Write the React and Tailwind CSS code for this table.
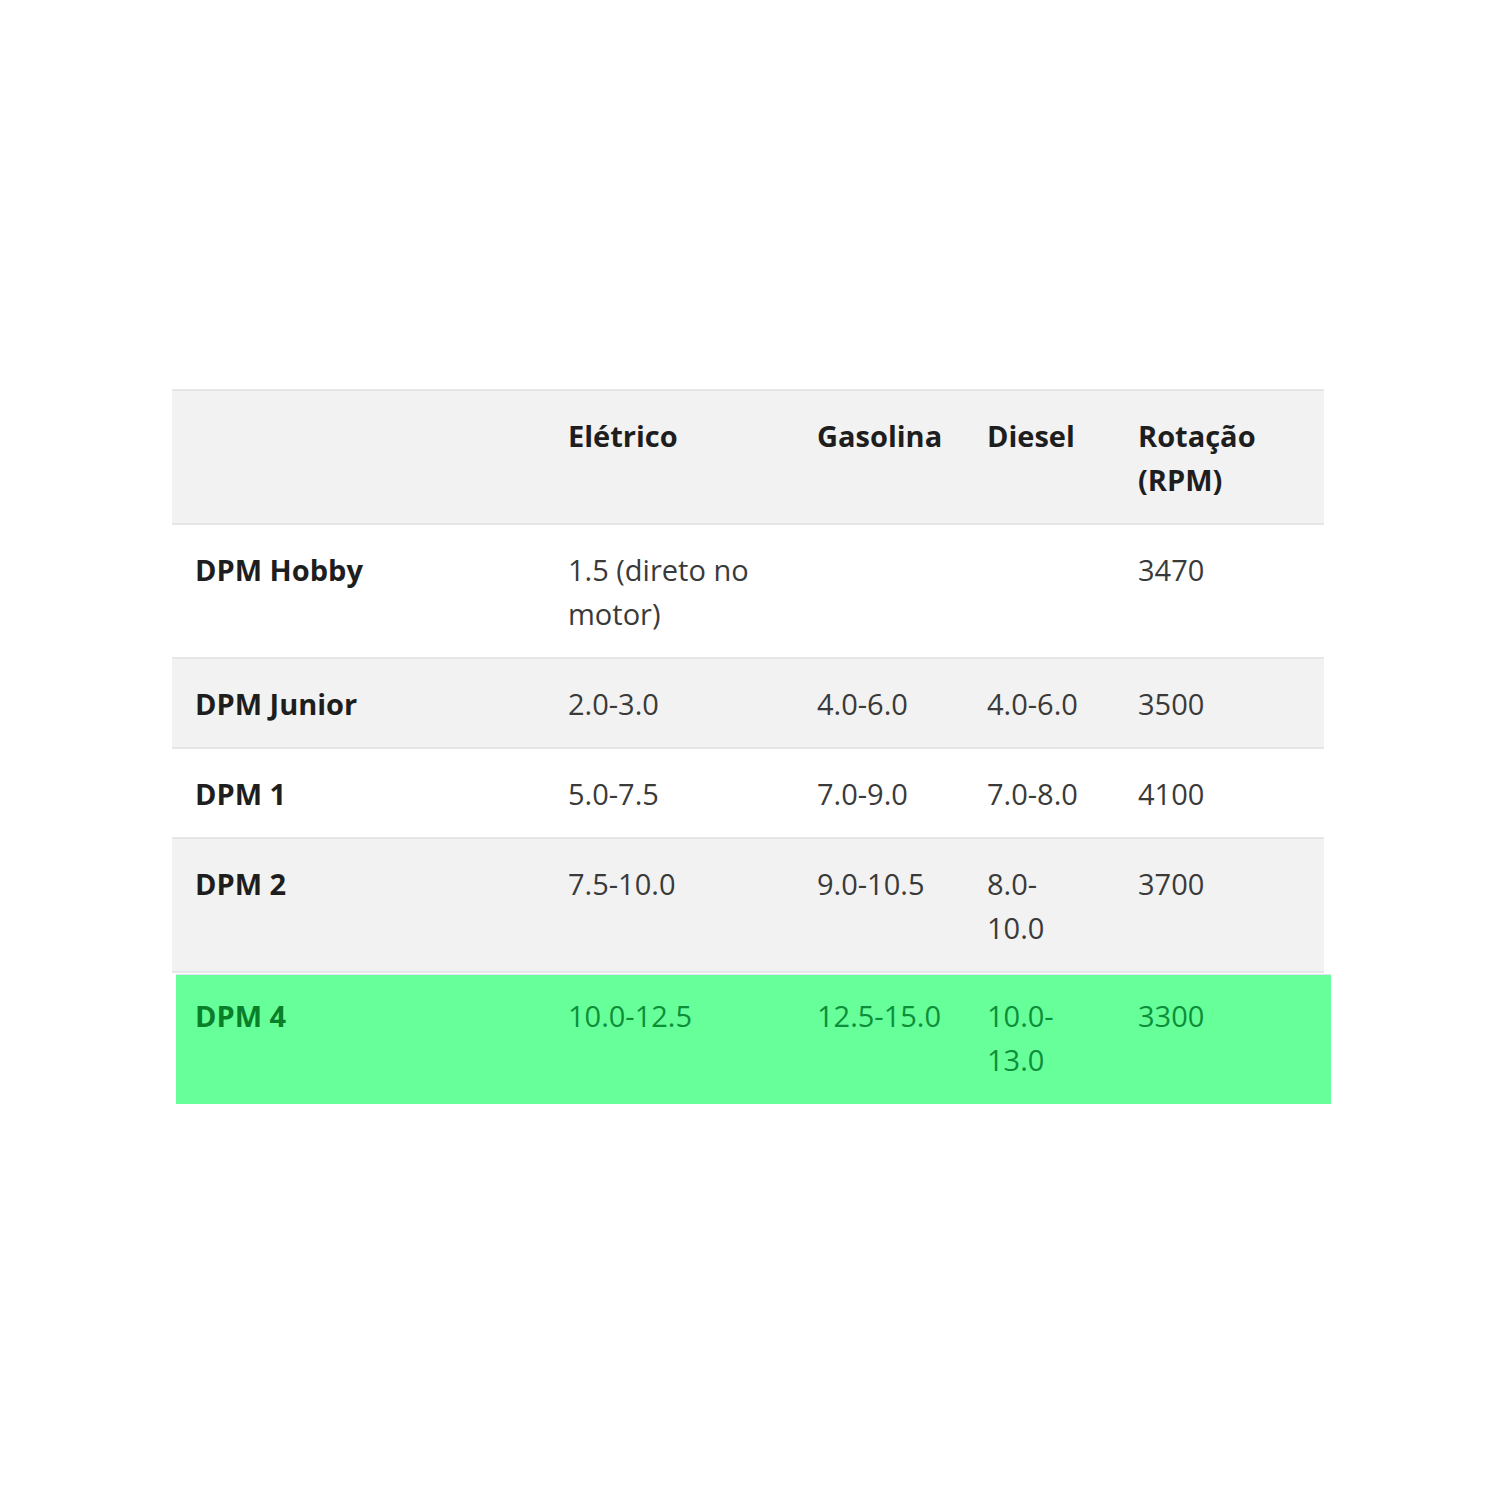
const COLS = "grid grid-cols-[373px_249px_170px_151px_209px]";
const PAD = ["pl-[23px] pr-[16px]", "pl-[23px] pr-[16px]", "pl-[23px] pr-[14px]", "pl-[23px] pr-[24px]", "pl-[23px] pr-[16px]"];

const HEAD = ["", "Elétrico", "Gasolina", "Diesel", "Rotação (RPM)"];

const ROWS = [
  { name: "DPM Hobby", cells: ["1.5 (direto no motor)", "", "", "3470"], bg: "bg-white" },
  { name: "DPM Junior", cells: ["2.0-3.0", "4.0-6.0", "4.0-6.0", "3500"], bg: "bg-[#f2f2f2]" },
  { name: "DPM 1", cells: ["5.0-7.5", "7.0-9.0", "7.0-8.0", "4100"], bg: "bg-white" },
  { name: "DPM 2", cells: ["7.5-10.0", "9.0-10.5", "8.0-10.0", "3700"], bg: "bg-[#f2f2f2]" },
];

export default function App() {
  return (
    <div className="min-h-[1500px] w-[1500px] bg-white pt-[389px] font-['Open_Sans',sans-serif] text-[29px] leading-[44px]">
      <div className="ml-[172px] w-[1152px]">
        {/* header */}
        <div className={`${COLS} border-y-2 border-[#e6e6e6] bg-[#f2f2f2] font-bold text-[#1e1e1e]`}>
          {HEAD.map((h, i) => (
            <div key={i} className={`${PAD[i]} pt-[23px] pb-[21px]`}>
              {h}
            </div>
          ))}
        </div>

        {ROWS.map((r) => (
          <div key={r.name} className={`${COLS} border-b-2 border-[#e6e6e6] ${r.bg} text-[#3a3a3a]`}>
            <div className={`${PAD[0]} pt-[23px] pb-[21px] font-bold text-[#1e1e1e]`}>{r.name}</div>
            {r.cells.map((c, i) => (
              <div key={i} className={`${PAD[i + 1]} pt-[23px] pb-[21px]`}>
                {c}
              </div>
            ))}
          </div>
        ))}
      </div>

      {/* highlighted row */}
      <div className="ml-[176px] mt-[1px] grid w-[1155px] grid-cols-[369px_249px_170px_151px_216px] border-t border-[#dfe4f5] bg-[#66ff99] text-[#0d8f3a]">
        <div className="pl-[19px] pr-[16px] pt-[19px] pb-[22px] font-bold text-[#0a7f2a]">DPM 4</div>
        <div className="pl-[23px] pr-[16px] pt-[19px] pb-[22px]">10.0-12.5</div>
        <div className="pl-[23px] pr-[14px] pt-[19px] pb-[22px]">12.5-15.0</div>
        <div className="pl-[23px] pr-[24px] pt-[19px] pb-[22px]">10.0-13.0</div>
        <div className="pl-[23px] pr-[16px] pt-[19px] pb-[22px]">3300</div>
      </div>
    </div>
  );
}
